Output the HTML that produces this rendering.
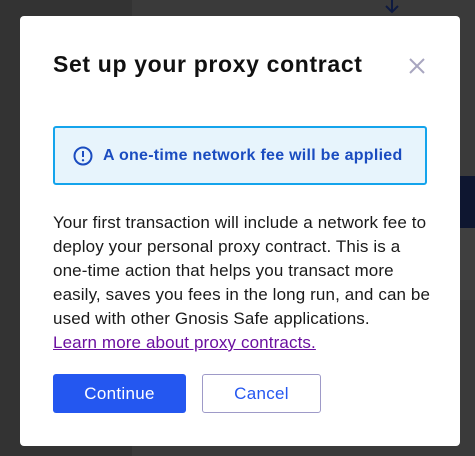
<!DOCTYPE html>
<html><head><style>
body{margin:0;width:475px;height:456px;background:#333;position:relative;overflow:hidden;font-family:"Liberation Sans",sans-serif}
.bg1{position:absolute;left:132px;top:0;width:343px;height:456px;background:#3a3a3a}
.nav{position:absolute;left:440px;top:176px;width:35px;height:52px;background:#0e1630}
.gr{position:absolute;left:440px;top:228px;width:35px;height:72px;background:#3f3f3f}
.modal{position:absolute;left:20px;top:16px;width:440px;height:430px;background:#fff;border-radius:4px}
h1{position:absolute;left:33px;top:35px;margin:0;font-size:23px;font-weight:bold;color:#111;letter-spacing:0.65px;white-space:nowrap}
.x{position:absolute;left:389px;top:42px}
.alert{position:absolute;left:33px;top:110px;width:370px;height:55px;border:2px solid #14a4ec;border-radius:3px;background:#e7f4fc}
.alert span{position:absolute;left:48px;top:19px;font-size:16px;font-weight:bold;color:#1a4cc0;letter-spacing:0.27px;white-space:nowrap}
.alert svg{position:absolute;left:18px;top:18px}
p{position:absolute;left:33px;top:195px;margin:0;font-size:17px;line-height:24px;color:#1a1a1a;white-space:nowrap;letter-spacing:0.12px}
a{color:#6b10a0;text-decoration:underline}
.b1{position:absolute;left:33px;top:358px;width:133px;height:39px;background:#2457f0;border-radius:3px;color:#fff;font-size:17px;text-align:center;line-height:39px;letter-spacing:0.3px}
.b2{position:absolute;left:182px;top:358px;width:117px;height:37px;border:1px solid #9e9ac8;border-radius:3px;color:#2457f0;font-size:17px;text-align:center;line-height:37px;letter-spacing:0.3px}
</style></head><body>
<div class="bg1"></div><div class="nav"></div><div class="gr"></div>
<svg style="position:absolute;left:383px;top:0" width="18" height="14"><path d="M9 0V11M3 6L9 12L15 6" stroke="#0e1a40" stroke-width="2" fill="none"/></svg>
<div class="modal">
<h1>Set up your proxy contract</h1>
<svg class="x" width="16" height="16"><path d="M1 1L15 15M15 1L1 15" stroke="#a8a6c0" stroke-width="2"/></svg>
<div class="alert"><svg width="20" height="20"><circle cx="10" cy="10" r="8.5" stroke="#1a4cc0" stroke-width="2" fill="none"/><path d="M10 5V11" stroke="#1a4cc0" stroke-width="2"/><circle cx="10" cy="14.3" r="1.2" fill="#1a4cc0"/></svg><span>A one-time network fee will be applied</span></div>
<p>Your first transaction will include a network fee to<br>deploy your personal proxy contract. This is a<br>one-time action that helps you transact more<br>easily, saves you fees in the long run, and can be<br>used with other Gnosis Safe applications.<br><a>Learn more about proxy contracts.</a></p>
<div class="b1">Continue</div>
<div class="b2">Cancel</div>
</div>
</body></html>
